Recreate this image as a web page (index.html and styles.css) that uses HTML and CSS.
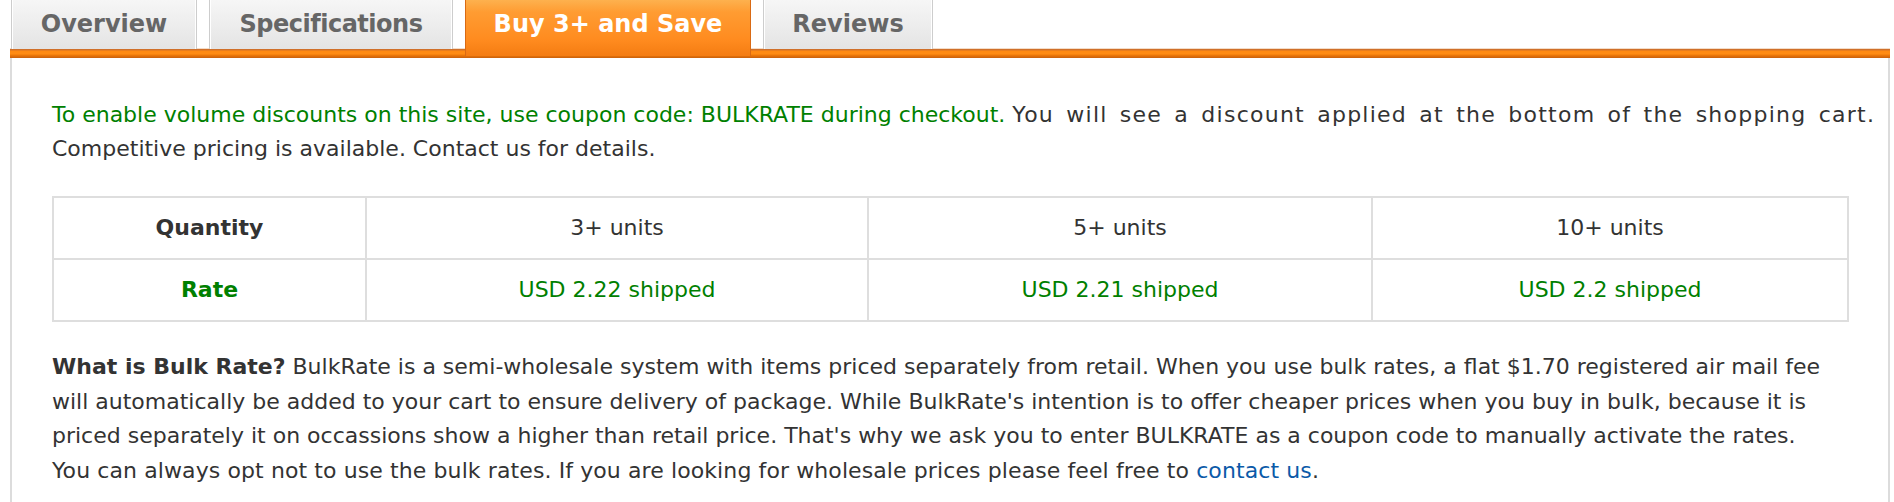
FILE: index.html
```html
<!DOCTYPE html>
<html>
<head>
<meta charset="utf-8">
<link rel="stylesheet" href="styles.css">
</head>
<body>
<div class="wrap">
  <ul class="tabs">
    <li class="tab tab-overview">Overview</li>
    <li class="tab tab-specs">Specifications</li>
    <li class="tab tab-buy active">Buy 3+ and Save</li>
    <li class="tab tab-reviews">Reviews</li>
  </ul>
  <div class="bar"></div>
  <div class="panel">
    <p class="intro"><span class="green">To enable volume discounts on this site, use coupon code: BULKRATE during checkout.</span> <span class="note">You will see a discount applied at the bottom of the shopping cart.</span><br>Competitive pricing is available. Contact us for details.</p>
    <table class="rates">
      <colgroup>
        <col class="c1"><col class="c2"><col class="c3"><col class="c4">
      </colgroup>
      <tr>
        <th>Quantity</th>
        <td>3+ units</td>
        <td>5+ units</td>
        <td>10+ units</td>
      </tr>
      <tr class="green">
        <th>Rate</th>
        <td>USD 2.22 shipped</td>
        <td>USD 2.21 shipped</td>
        <td>USD 2.2 shipped</td>
      </tr>
    </table>
    <p class="about"><strong>What is Bulk Rate?</strong> BulkRate is a semi-wholesale system with items priced separately from retail. When you use bulk rates, a flat $1.70 registered air mail fee<br>will automatically be added to your cart to ensure delivery of package. While BulkRate's intention is to offer cheaper prices when you buy in bulk, because it is<br>priced separately it on occassions show a higher than retail price. That's why we ask you to enter BULKRATE as a coupon code to manually activate the rates.<br><span class="last">You can always opt not to use the bulk rates. If you are looking for wholesale prices please feel free to <a href="#">contact us</a>.</span></p>
  </div>
</div>
</body>
</html>
```

FILE: styles.css
```css
html, body {
  margin: 0;
  padding: 0;
  background: #fff;
}
body {
  font-family: "DejaVu Sans", Verdana, sans-serif;
  font-size: 22px;
  color: #333;
}
.wrap {
  margin: 0 4px 0 10px;
}
.tabs {
  list-style: none;
  margin: 0;
  padding: 0 0 0 1px;
  display: flex;
  gap: 12px;
  height: 49px;
  position: relative;
  z-index: 2;
}
.tab {
  height: 49px;
  line-height: 49px;
  padding: 0;
  box-sizing: border-box;
  text-align: center;
  white-space: nowrap;
  font-weight: bold;
  font-size: 24px;
  color: #666;
  background: linear-gradient(#f6f6f6, #e4e4e4);
  border: 1px solid #cdcdcd;
  border-top: none;
  border-bottom: none;
  box-shadow: inset 1px 0 0 #fff, inset -1px 0 0 #fff;
}
.tab-overview { width: 186px; }
.tab-specs { width: 244px; letter-spacing: -0.5px; }
.tab-buy { width: 286px; }
.tab-reviews { width: 170px; }
.tab.active {
  color: #fff;
  height: 56px;
  line-height: 49px;
  background: linear-gradient(#fdb14e 0px, #ff9c32 12px, #ff8b1f 40px, #f47c12 56px);
  border: 1px solid #d96a14;
  border-top: none;
  border-bottom: none;
  box-shadow: none;
}
.bar {
  height: 9px;
  background: linear-gradient(#d0702a 0px, #d0702a 1px, #ff8a12 2px, #ff8c14 5px, #f07a08 6px, #c9600c 9px);
  box-shadow: 0 -1px 0 #f3dcc8;
}
.panel {
  border-left: 2px solid #dcdcdc;
  border-right: 2px solid #dcdcdc;
  padding: 40px 41px 40px 40px;
}
.intro {
  margin: 0;
  line-height: 34px;
  white-space: nowrap;
}
.note {
  word-spacing: 4px;
  letter-spacing: 1.25px;
}
.green {
  color: #008000;
}
.rates {
  width: 100%;
  table-layout: fixed;
  border-collapse: collapse;
  margin: 30px 0 28px;
  text-align: center;
}
.c1 { width: 313px; }
.c2 { width: 502px; }
.c3 { width: 504px; }
.c4 { width: 476px; }
.rates th, .rates td {
  border: 2px solid #dedede;
  padding: 13px 10px;
  line-height: 34px;
  font-size: 22px;
}
.rates th {
  font-weight: bold;
}
.about {
  margin: 0;
  line-height: 34.6px;
  white-space: nowrap;
}
.about .last {
  letter-spacing: 0.1px;
}
.about strong {
  color: #333;
}
.about a {
  color: #0b5aa8;
  text-decoration: none;
}
```
